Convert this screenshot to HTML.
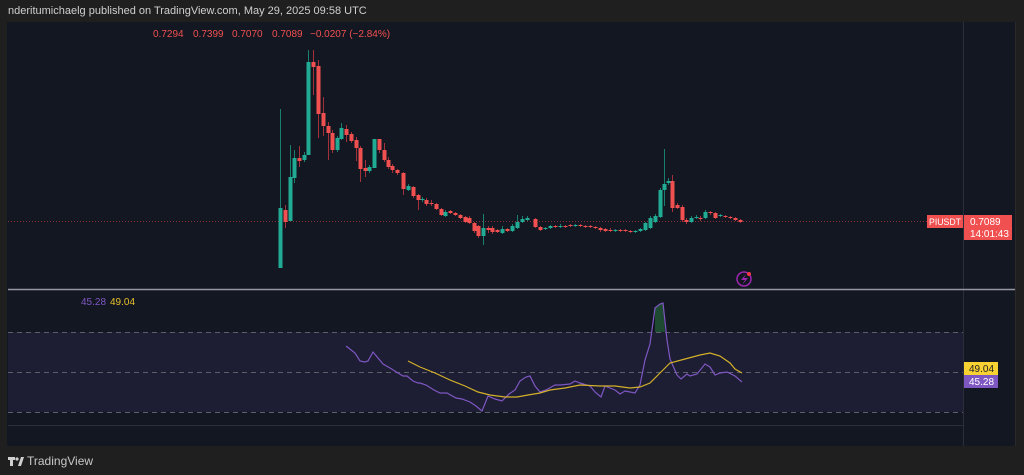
<!DOCTYPE html>
<html><head><meta charset="utf-8"><style>
html,body{margin:0;padding:0;background:#1f1f1f;width:1024px;height:475px;overflow:hidden;font-family:"Liberation Sans",sans-serif}
#top{position:absolute;left:8px;top:5px;font-size:11px;color:#cfcfcf}
#chart{position:absolute;left:7px;top:22px;width:1009px;height:424px;background:#131722}
#foot{position:absolute;left:27px;top:454px;font-size:12px;color:#c8c8c8}
</style></head><body>
<div id="top">nderitumichaelg published on TradingView.com, May 29, 2025 09:58 UTC</div>
<div id="chart"></div>
<svg width="1024" height="475" style="position:absolute;left:0;top:0" id="s">
 <line x1="963.5" y1="22" x2="963.5" y2="446" stroke="#2a2e39"/>
 <rect x="8" y="332" width="955" height="80" fill="#1d1d33"/>
 <g stroke="#5d606b" stroke-dasharray="5,4">
  <line x1="8" y1="332.5" x2="963" y2="332.5"/><line x1="8" y1="372.5" x2="963" y2="372.5"/><line x1="8" y1="412.5" x2="963" y2="412.5"/>
 </g>
 <line x1="8" y1="425.5" x2="963" y2="425.5" stroke="#2a2e39"/>
 <line x1="8" y1="289.5" x2="1016" y2="289.5" stroke="#9598a1" stroke-width="1.5"/>
 <line x1="8" y1="221.5" x2="963" y2="221.5" stroke="#8a2c33" stroke-dasharray="1,2"/>
 <g id="c"></g>
 <path d="M655,332 L655,308 L660,304 L663,303 L665,332Z" fill="#1e4a32"/>
 <polyline fill="none" stroke="#7e57c2" stroke-width="1.2" points="346,346 355,353 360,361 365,362 368,361 373,352 378,358 383,364 390,368 398,373 403,376 407,376 413,381 418,383 420,383 426,385 434,390 440,393 447,393 456,398 462,399 470,402 476,406 482,411 488,396 495,399 502,401 509,394 515,390 520,381 526,377 530,376 535,386 540,392 546,390 555,385 560,385 570,384 575,381 580,383 590,386 595,392 601,397 605,386 615,390 620,394 625,391 630,392 635,393 640,385 645,360 650,344 655,308 660,304 663,303 667,340 670,359 677,375 681,379 687,374 690,376 697,374 705,364 710,367 715,375 720,373 727,372 735,376 742,382"/>
 <polyline fill="none" stroke="#d4b12b" stroke-width="1.2" points="408,361 420,367 435,373 450,380 465,386 478,392 490,395 505,397 517,397 528,395 540,393 550,390 565,388 580,385 600,386 615,386 630,388 640,387 650,383 660,373 670,363 685,359 700,355 710,353 720,356 730,363 735,369 742,373"/>
 <circle cx="744" cy="279" r="7" fill="none" stroke="#9c27b0" stroke-width="1.5"/>
 <path d="M746,274 L741,280 L745,280 L742,285 L748,278 L744,278Z" fill="#9c27b0"/>
 <circle cx="749" cy="274" r="2" fill="#f23645"/>
 <g font-size="10" font-family="Liberation Sans">
  <text x="153" y="37" fill="#f05050">0.7294</text><text x="193" y="37" fill="#f05050">0.7399</text><text x="232" y="37" fill="#f05050">0.7070</text><text x="272" y="37" fill="#f05050">0.7089</text><text x="310" y="37" fill="#f05050">−0.0207 (−2.84%)</text>
  <text x="81" y="305" fill="#7e57c2">45.28</text><text x="110" y="305" fill="#e8c12b">49.04</text>
  <rect x="927" y="215" width="36" height="13" fill="#f05050"/><text x="929" y="225" fill="#fff" font-size="9.5" textLength="32" lengthAdjust="spacingAndGlyphs">PIUSDT</text>
  <rect x="964" y="215" width="48" height="25" fill="#f05050"/><text x="970" y="225" fill="#fff">0.7089</text><text x="970" y="237" fill="#fff">14:01:43</text>
  <rect x="964" y="362" width="34" height="13" fill="#f7d232"/><text x="969" y="372" fill="#222">49.04</text>
  <rect x="964" y="375" width="34" height="13" fill="#7e57c2"/><text x="969" y="385" fill="#fff">45.28</text>
 </g>
 <line x1="1015.5" y1="22" x2="1015.5" y2="446" stroke="#2a2a2a"/>
 <g fill="#d0d0d0"><rect x="8" y="457" width="7" height="3"/><rect x="10" y="457" width="3" height="9"/><circle cx="17" cy="459" r="1.6"/><path d="M18,466 L21,457 L24,457 L21,466Z"/></g>
</svg>
<div id="foot">TradingView</div>
<script>
var d=[[280,268,208,109,268],[285,210,222,205,228],[290,221,177,145,221],[294,178,158,150,183],[299,158,161,146,167],[304,160,155,152,162],[308,155,62,50,155],[313,62,67,50,95],[318,66,114,60,138],[323,113,126,97,136],[328,126,133,122,160],[332,133,150,130,153],[337,150,138,136,152],[341,139,128,123,140],[346,129,135,125,142],[351,134,141,132,143],[356,140,148,137,161],[360,148,169,146,182],[365,168,171,160,177],[369,171,167,165,173],[374,168,139,139,168],[379,139,150,139,153],[384,150,160,143,162],[388,160,167,157,169],[392,166,170,164,173],[397,170,173,169,175],[403,173,189,172,195],[408,190,186,184,191],[413,187,196,186,198],[418,195,200,194,210],[422,200,199,197,202],[426,200,204,198,206],[431,203,204,200,206],[436,204,209,203,210],[441,209,215,208,216],[445,216,212,210,217],[450,211,213,210,214],[455,213,215,212,216],[460,215,218,214,219],[465,217,222,216,223],[469,218,223,216,224],[474,223,231,222,233],[478,226,236,225,238],[483,236,228,214,245],[488,228,230,226,233],[492,228,232,226,234],[497,230,232,229,233],[502,233,229,226,234],[507,229,231,228,232],[512,231,226,224,232],[517,228,222,215,229],[522,222,219,216,223],[527,220,218,216,221],[535,219,227,218,228],[540,227,230,226,231],[545,229,228,227,230],[550,228,226,225,229],[555,226,227,225,228],[560,227,226,224,228],[565,226,227,225,228],[570,225,226,224,227],[575,226,225,224,227],[580,225,226,224,227],[585,226,227,225,228],[590,226,227,225,228],[595,227,228,226,229],[600,228,230,227,232],[605,229,231,228,232],[610,230,231,228,232],[615,231,230,229,232],[620,230,231,229,232],[625,230,231,229,232],[630,231,232,230,233],[635,232,231,230,233],[640,231,229,228,232],[645,230,223,222,231],[650,228,218,216,229],[655,222,216,214,223],[660,217,190,188,218],[664,190,184,149,206],[668,183,181,178,185],[672,181,208,175,212],[677,205,208,203,209],[682,207,220,205,222],[686,220,222,218,224],[691,222,218,216,223],[696,218,217,215,219],[700,218,219,216,221],[705,218,212,210,219],[710,212,213,211,215],[715,213,218,212,219],[720,216,215,214,217],[725,216,217,215,218],[730,217,218,216,219],[735,218,220,217,221],[740,220,222,219,223]];
var g=document.getElementById('c'),h='';
d.forEach(function(c){var x=c[0],o=c[1],cl=c[2],hi=c[3],lo=c[4];var up=cl<o;var col=up?'#22ab94':'#f05050';var t=Math.min(o,cl),b=Math.max(o,cl);if(b-t<1)b=t+1;
h+='<line x1="'+(x+0.5)+'" y1="'+hi+'" x2="'+(x+0.5)+'" y2="'+lo+'" stroke="'+(up?'#1b7f6f':'#a3303a')+'"/>';
h+='<rect x="'+(x-1.5)+'" y="'+t+'" width="4" height="'+(b-t)+'" fill="'+col+'"/>';});
g.innerHTML=h;
</script>
</body></html>
